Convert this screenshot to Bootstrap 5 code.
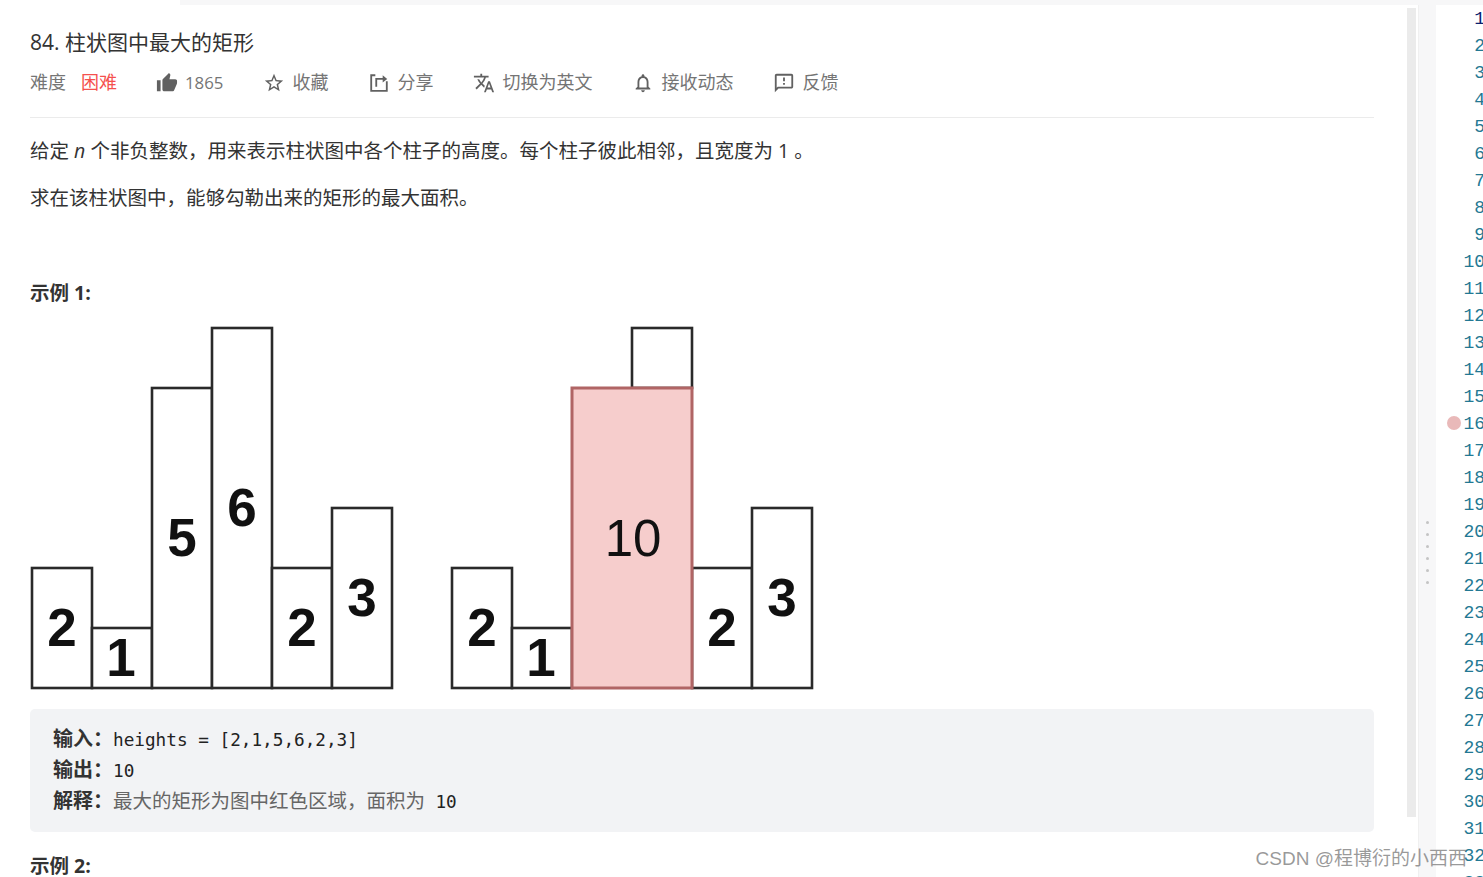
<!DOCTYPE html>
<html lang="zh-CN">
<head>
    <meta charset="UTF-8">
    <meta name="viewport" content="width=device-width, initial-scale=1.0">
    <title>84. 柱状图中最大的矩形</title>
    <link href="https://cdn.jsdelivr.net/npm/bootstrap@5.3.0/dist/css/bootstrap.min.css" rel="stylesheet">
    <style>
        html, body { height: 100%; overflow: hidden; }
        body {
            background: #f7f7f8;
            font-family: "Open Sans", "Noto Sans CJK SC", sans-serif;
            color: #333;
        }
        .top-left { width: 180px; height: 5px; background: #fff; }
        .top-strip { height: 5px; }
        .page-row { height: 872px; }
        .desc-panel {
            width: 1419px;
            background: #fff;
            padding: 0 44px 0 30px;
            border-right: 1px solid #f0f0f0;
        }
        .problem-title { font-size: 21px; font-weight: 400; line-height: 28px; margin: 23px 0 0; color: #333; }
        .meta-row { height: 36px; margin-top: 8.5px; font-size: 18px; color: #757575; gap: 40px; }
        .meta-row svg { width: 22px; height: 22px; fill: #616161; flex: none; }
        .meta-row .share-ico { fill: none; stroke: #616161; stroke-width: 2; }
        .meta-row .share-ico .arrow-tip { fill: #616161; stroke: none; }
        .meta-item { gap: 7px; }
        .like-count { font-size: 16.8px; }
        .level-hard { color: #f5504e; margin-left: 15px; margin-right: -1px; }
        .rule-line { border-top: 1px solid #ebebeb; margin-top: 16.5px; }
        .desc-text { font-size: 19.5px; line-height: 30px; margin: 0; color: #333; }
        .desc-one { margin-top: 18px; }
        .desc-two { margin-top: 17px; }
        .example-label { font-size: 19.5px; font-weight: 700; line-height: 28px; color: #333; margin: 0; }
        .label-one { margin-top: 66px; }
        .label-two { margin-top: 20px; }
        .chart-pic { display: block; margin-top: 19px; width: 784px; height: 364px; }
        .bar-line { fill: #fff; stroke: #2a2a2a; stroke-width: 2.6; }
        .bar-red { fill: #f6cdcc; stroke: #b06565; stroke-width: 3; }
        .bar-num { font-family: "Liberation Sans", sans-serif; font-size: 53px; font-weight: 700; fill: #111; text-anchor: middle; }
        .bar-num-thin { font-weight: 400; font-size: 51px; }
        .code-box {
            background: #f2f3f5;
            border-radius: 5px;
            height: 123px;
            margin-top: 19px;
            padding: 16px 23px;
            font-family: "DejaVu Sans Mono", "Noto Sans CJK SC", monospace;
            font-size: 17.7px;
            line-height: 31px;
            color: #222;
        }
        .code-box b { font-family: "Noto Sans CJK SC", sans-serif; font-size: 20px; font-weight: 700; color: #333; line-height: 1; }
        .code-note { font-family: "Noto Sans CJK SC", sans-serif; font-size: 19.5px; color: #666; line-height: 1; margin-right: 6px; }
        .fake-scroll { right: 2px; top: 3px; width: 9px; height: 809px; background: #ebebeb; }
        .split-bar { width: 17px; }
        .split-dot { width: 3px; height: 3px; border-radius: 50%; background: #c4c4c4; }
        .split-dots { gap: 9px; margin-top: 516px; }
        .editor-pane { flex: 1; background: #fff; overflow: hidden; padding-top: 1px; }
        .line-num {
            height: 27px;
            line-height: 27px;
            width: 49px;
            font-family: "Liberation Mono", monospace;
            font-size: 18px;
            color: #237893;
            text-align: right;
            white-space: nowrap;
        }
        .line-num.active-num { color: #0b216f; }
        .break-dot { left: 11px; top: 5px; width: 14px; height: 14px; border-radius: 50%; background: #e9b9b9; }
        .csdn-mark {
            right: 16px;
            bottom: 5px;
            font-family: "Liberation Sans", "Noto Sans CJK SC", sans-serif;
            font-size: 19px;
            line-height: 26px;
            color: rgba(120, 120, 120, .75);
        }
    </style>
</head>
<body class="position-relative">
    <div class="d-flex top-strip">
        <div class="top-left"></div>
    </div>
    <div class="d-flex page-row">
        <div class="desc-panel position-relative overflow-hidden flex-shrink-0">
            <h1 class="problem-title">84. 柱状图中最大的矩形</h1>
            <div class="d-flex align-items-center meta-row">
                <div class="d-flex align-items-center">难度<span class="level-hard">困难</span></div>
                <div class="d-flex align-items-center meta-item">
                    <svg viewBox="0 0 24 24"><path d="M1 21h4V9H1v12zm22-11c0-1.100-.9-2-2-2h-6.310l.95-4.570.03-.32c0-.41-.17-.79-.44-1.060L14.170 1 7.590 7.590C7.220 7.950 7 8.450 7 9v10c0 1.100.9 2 2 2h9c.83 0 1.540-.5 1.800-1.220l3.020-7.050c.08-.23.13-.47.13-.73v-2z"/></svg>
                    <span class="like-count">1865</span>
                </div>
                <div class="d-flex align-items-center meta-item">
                    <svg viewBox="0 0 24 24"><path d="M22 9.240l-7.190-.62L12 2 9.190 8.630 2 9.240l5.460 4.730L5.820 21 12 17.270 18.180 21l-1.630-7.030L22 9.240zM12 15.400l-3.760 2.270 1-4.280-3.320-2.880 4.380-.38L12 6.100l1.710 4.040 4.380.38-3.320 2.880 1 4.280L12 15.400z"/></svg>
                    <span>收藏</span>
                </div>
                <div class="d-flex align-items-center meta-item">
                    <svg class="share-ico" viewBox="0 0 24 24"><path d="M8 3.500H3.500v17h17V10"/><path d="M9 16V7.500h8"/><path class="arrow-tip" d="M16 3.500l5 4-5 4z"/></svg>
                    <span>分享</span>
                </div>
                <div class="d-flex align-items-center meta-item">
                    <svg viewBox="0 0 24 24"><path d="M12.870 15.070l-2.540-2.510.03-.03c1.740-1.940 2.980-4.170 3.710-6.530H17V4h-7V2H8v2H1v1.990h11.170C11.500 7.920 10.440 9.750 9 11.350 8.070 10.320 7.300 9.190 6.690 8h-2c.73 1.630 1.730 3.170 2.980 4.560l-5.090 5.020L4 19l5-5 3.110 3.110.76-2.040zM18.500 10h-2L12 22h2l1.120-3h4.750L21 22h2l-4.500-12zm-2.620 7l1.620-4.330L19.120 17h-3.240z"/></svg>
                    <span>切换为英文</span>
                </div>
                <div class="d-flex align-items-center meta-item">
                    <svg viewBox="0 0 24 24"><path d="M12 22c1.100 0 2-.9 2-2h-4c0 1.100.9 2 2 2zm6-6v-5c0-3.070-1.630-5.640-4.500-6.320V4c0-.83-.67-1.500-1.500-1.500s-1.500.67-1.500 1.500v.68C7.640 5.360 6 7.920 6 11v5l-2 2v1h16v-1l-2-2zm-2 1H8v-6c0-2.480 1.510-4.500 4-4.500s4 2.020 4 4.500v6z"/></svg>
                    <span>接收动态</span>
                </div>
                <div class="d-flex align-items-center meta-item">
                    <svg viewBox="0 0 24 24"><path d="M20 2H4c-1.100 0-1.990.9-1.990 2L2 22l4-4h14c1.100 0 2-.9 2-2V4c0-1.100-.9-2-2-2zm0 14H5.170L4 17.170V4h16v12zm-9-4h2v2h-2zm0-6h2v4h-2z"/></svg>
                    <span>反馈</span>
                </div>
            </div>
            <div class="rule-line"></div>

            <p class="desc-text desc-one">给定 <em>n</em> 个非负整数，用来表示柱状图中各个柱子的高度。每个柱子彼此相邻，且宽度为 1 。</p>
            <p class="desc-text desc-two">求在该柱状图中，能够勾勒出来的矩形的最大面积。</p>

            <p class="example-label label-one">示例 1:</p>
            <svg class="chart-pic" viewBox="30 326 784 364">
                <rect class="bar-line" x="32" y="568" width="60" height="120"/>
                <rect class="bar-line" x="92" y="628" width="60" height="60"/>
                <rect class="bar-line" x="152" y="388" width="60" height="300"/>
                <rect class="bar-line" x="212" y="328" width="60" height="360"/>
                <rect class="bar-line" x="272" y="568" width="60" height="120"/>
                <rect class="bar-line" x="332" y="508" width="60" height="180"/>
                <text class="bar-num" x="62" y="646">2</text>
                <text class="bar-num" x="121" y="676">1</text>
                <text class="bar-num" x="182" y="556">5</text>
                <text class="bar-num" x="242" y="526">6</text>
                <text class="bar-num" x="302" y="646">2</text>
                <text class="bar-num" x="362" y="616">3</text>

                <rect class="bar-line" x="452" y="568" width="60" height="120"/>
                <rect class="bar-line" x="512" y="628" width="60" height="60"/>
                <rect class="bar-line" x="632" y="328" width="60" height="60"/>
                <rect class="bar-line" x="692" y="568" width="60" height="120"/>
                <rect class="bar-line" x="752" y="508" width="60" height="180"/>
                <rect class="bar-red" x="572" y="388" width="120" height="300"/>
                <text class="bar-num" x="482" y="646">2</text>
                <text class="bar-num" x="541" y="676">1</text>
                <text class="bar-num bar-num-thin" x="633" y="556">10</text>
                <text class="bar-num" x="722" y="646">2</text>
                <text class="bar-num" x="782" y="616">3</text>
            </svg>

            <div class="code-box">
                <div><b>输入：</b>heights = [2,1,5,6,2,3]</div>
                <div><b>输出：</b>10</div>
                <div><b>解释：</b><span class="code-note">最大的矩形为图中红色区域，面积为 </span>10</div>
            </div>

            <p class="example-label label-two">示例 2:</p>

            <div class="fake-scroll position-absolute"></div>
        </div>

        <div class="split-bar d-flex flex-column align-items-center flex-shrink-0">
            <div class="split-dots d-flex flex-column">
                <div class="split-dot"></div><div class="split-dot"></div><div class="split-dot"></div>
                <div class="split-dot"></div><div class="split-dot"></div><div class="split-dot"></div>
            </div>
        </div>

        <div class="editor-pane" id="editor"></div>
    </div>

    <div class="csdn-mark position-absolute">CSDN @程博衍的小西西</div>

    <script>
        const editor = document.getElementById('editor');
        for (let i = 1; i <= 33; i++) {
            const row = document.createElement('div');
            row.className = 'line-num position-relative' + (i === 1 ? ' active-num' : '');
            row.textContent = i;
            if (i === 16) {
                const dot = document.createElement('span');
                dot.className = 'break-dot position-absolute';
                row.appendChild(dot);
            }
            editor.appendChild(row);
        }
    </script>
    <script src="https://cdn.jsdelivr.net/npm/bootstrap@5.3.0/dist/js/bootstrap.bundle.min.js"></script>
</body>
</html>
